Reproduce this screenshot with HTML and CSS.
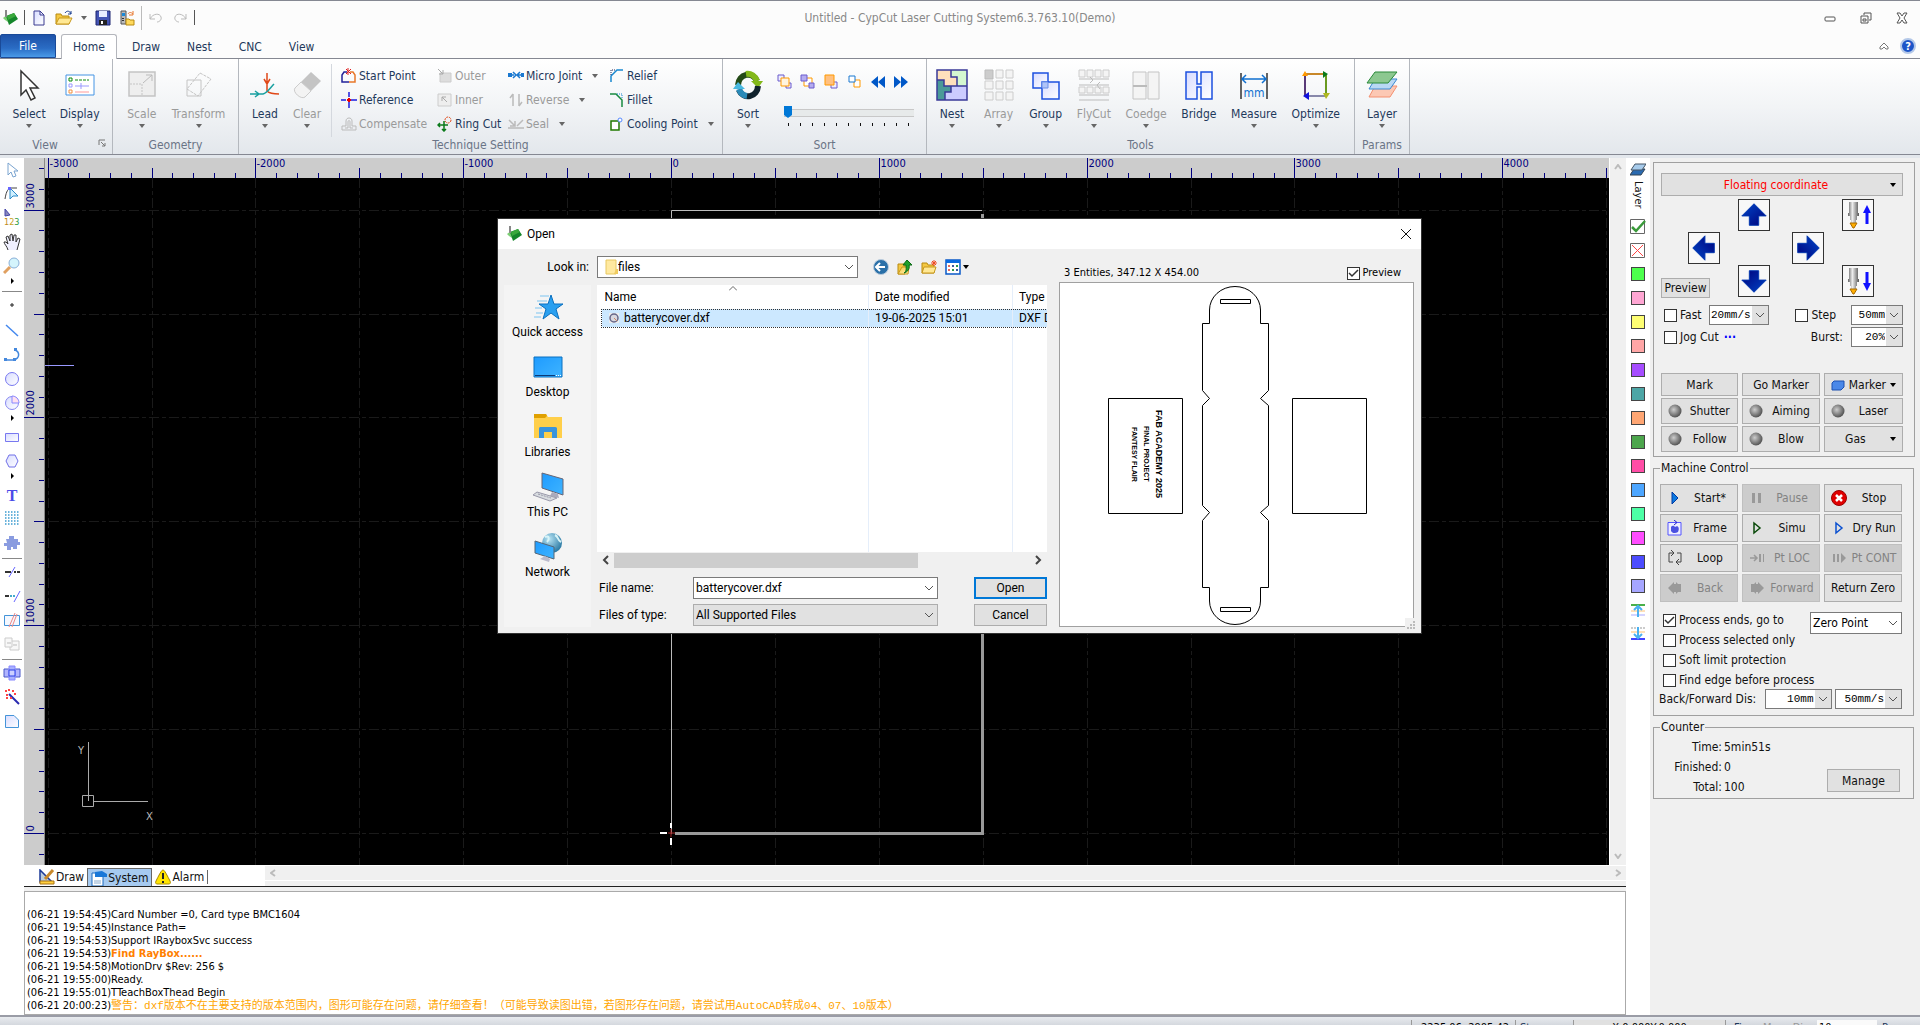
FILE: index.html
```html
<!DOCTYPE html>
<html lang="en">
<head>
    <meta charset="UTF-8">
    <meta name="viewport" content="width=device-width, initial-scale=1.0">
    <title>Untitled - CypCut Laser Cutting System</title>
    <link rel="stylesheet" href="styles.css">
</head>
<body>
    <svg class="defs" width="0" height="0" aria-hidden="true">
      <defs>
        <linearGradient id="lilac" x1="0" y1="0" x2="1" y2="1"><stop offset="0" stop-color="#d8dcff"/><stop offset="1" stop-color="#fff"/></linearGradient>
        <linearGradient id="navy" x1="0" y1="0" x2="1" y2="1"><stop offset="0" stop-color="#0046c8"/><stop offset="1" stop-color="#00007a"/></linearGradient>
        <linearGradient id="screen" x1="0" y1="0" x2="1" y2="1"><stop offset="0" stop-color="#1e9bff"/><stop offset="1" stop-color="#3fb4ff"/></linearGradient>
        <linearGradient id="metal"><stop offset="0" stop-color="#666"/><stop offset="0.4" stop-color="#eee"/><stop offset="1" stop-color="#555"/></linearGradient>
        <linearGradient id="gold" x1="0" y1="0" x2="1" y2="1"><stop offset="0" stop-color="#f4c842"/><stop offset="1" stop-color="#fff0b0"/></linearGradient>
        <radialGradient id="ball" cx="0.4" cy="0.4" r="0.6"><stop offset="0" stop-color="#ccc"/><stop offset="1" stop-color="#555"/></radialGradient>
        <radialGradient id="globe" cx="0.35" cy="0.3" r="0.8"><stop offset="0" stop-color="#b8e4f4"/><stop offset="1" stop-color="#1c6f9c"/></radialGradient>
        <symbol id="app" viewBox="0 0 16 16"><path d="M1 8 5 5 6 12 3 10Z" fill="#7ccf74"/><path d="M4 6 12 3 16 9 7 15Z" fill="#15862a"/><path d="M5 6 12 3 14 6 6 10Z" fill="#3aa83c"/><path d="M4 0V7" stroke="#888" fill="none" stroke-width="2"/></symbol>
        <symbol id="folder" viewBox="0 0 16 16"><path d="M1 4H6L7 6H13V14H1Z" fill="#f4c842" stroke="#b88a10"/><path d="M3 8H15L13 14H1Z" fill="#ffe894" stroke="#c8981c"/></symbol>
        <symbol id="led" viewBox="0 0 14 14"><circle cx="7" cy="7" r="6.5" fill="url(#ball)"/></symbol>
        <symbol id="arrow" viewBox="0 0 32 32"><path d="M16 4 29 17H21V27H11V17H3Z" fill="url(#navy)" stroke="#0038b0"/></symbol>
        <symbol id="nozzle" viewBox="0 0 14 28"><path d="M3 1H12V12H3ZM2 12H13V15H2ZM4 15H11V19H4ZM5 19H10V22H5Z" fill="url(#metal)"/><path d="M4 22H11L8 27H7Z" fill="#ffae00" stroke="#a86a00"/></symbol>
      </defs>
    </svg>

    <header class="titlebar">
      <div class="quick">
        <svg width="16" height="16"><use href="#app"/></svg>
        <i class="bar"></i>
        <button aria-label="New"><svg width="16" height="16" viewBox="0 0 16 16"><path d="M3 1H9L13 5V15H3Z" fill="url(#lilac)" stroke="#3a3a90"/><path d="M9 1V5H13" fill="none" stroke="#3a3a90"/></svg></button>
        <button aria-label="Open file"><svg width="18" height="16" viewBox="0 0 18 16"><path d="M1 4H6L7 6H14V14H1Z" fill="#f4c842" stroke="#b88a10"/><path d="M4 8H17L14 14H1Z" fill="#ffe894" stroke="#c8981c"/><path d="M10 3C12 0 15 1 16 4M16 4V1M16 4H13" fill="none" stroke="#1a3e90"/></svg></button>
        <button class="tiny" aria-label="Recent files"><i class="down"></i></button>
        <button aria-label="Save"><svg width="16" height="16" viewBox="0 0 16 16"><path d="M1 1H15V15H1Z" fill="#4454b4" stroke="#1c2470"/><path d="M4 1H12V7H4Z" fill="#e8ecff"/><path d="M4 10H12V15H4Z" fill="#222"/><path d="M6 11H8V14H6Z" fill="#fff"/></svg></button>
        <button aria-label="Import"><svg width="16" height="16" viewBox="0 0 16 16"><path d="M2 1H7V14H2Z" fill="#bbb" stroke="#555"/><path d="M3 3H6V6H3Z" fill="#1b8ad8"/><path d="M4 8V12" stroke="#333" stroke-width="2" stroke-dasharray="1"/><path d="M7 9H10L11 10H15V15H7Z" fill="#ffd95c" stroke="#b88a10"/><path d="M9 4C10 2 12 2 14 4M14 1V5H10" fill="none" stroke="#e8762c"/></svg></button>
        <i class="bar tall"></i>
        <button aria-label="Undo" disabled><svg width="16" height="16" viewBox="0 0 16 16"><path d="M2 4V9H7M2 9C5 3 12 3 13 7C14 10 11 12 9 12" fill="none" stroke="#bbb"/></svg></button>
        <button aria-label="Redo" disabled><svg width="16" height="16" viewBox="0 0 16 16"><path d="M14 4V9H9M14 9C11 3 4 3 3 7C2 10 5 12 7 12" fill="none" stroke="#bbb"/></svg></button>
        <i class="bar"></i>
      </div>
      <div class="title">Untitled - CypCut Laser Cutting System6.3.763.10(Demo)</div>
      <div class="winbtns">
        <button aria-label="Minimize"><svg width="12" height="12" viewBox="0 0 12 12"><rect x="1" y="5" width="10" height="4" rx="1" fill="#fff" stroke="#555"/></svg></button>
        <button aria-label="Restore"><svg width="12" height="12" viewBox="0 0 12 12"><path d="M4 3V1H11V8H9M1 4H8V11H1ZM3 7H6V9H3Z" fill="none" stroke="#555"/></svg></button>
        <button aria-label="Close"><svg width="12" height="12" viewBox="0 0 12 12"><path d="M1 1H4L6 4 8 1H11L8 6 11 11H8L6 8 4 11H1L4 6Z" fill="#fff" stroke="#555"/></svg></button>
      </div>
    </header>

    <nav class="tabs">
      <a class="file" href="#">File</a>
      <a class="active" href="#">Home</a>
      <a href="#">Draw</a>
      <a href="#">Nest</a>
      <a href="#">CNC</a>
      <a href="#">View</a>
      <div class="help">
        <svg width="12" height="12" viewBox="0 0 12 12"><path d="M2 7 6 3 10 7V9H8L6 7 4 9H2Z" fill="#fff" stroke="#777"/></svg>
        <svg width="16" height="16" viewBox="0 0 16 16"><circle cx="8" cy="8" r="7" fill="#1d55c8" stroke="#b4c8e8" stroke-width="2"/><text x="8" y="12" text-anchor="middle" fill="#fff" font-size="11" font-weight="bold">?</text></svg>
      </div>
    </nav>

    <section class="ribbon">
      <div class="group view">
        <div class="tools">
          <button class="big"><svg width="32" height="32" viewBox="0 0 32 32"><path d="M8 2V26L13 21 18 31 22 29 17 19H25Z" fill="#fff" stroke="#333" stroke-width="1.5"/></svg><span>Select</span><i class="down"></i></button>
          <button class="big"><svg width="32" height="32" viewBox="0 0 32 32"><path d="M2 6H30V26H2Z" fill="#fff" stroke="#4494e4"/><path d="M5 9H8V12H5Z" fill="none" stroke="#0a8a0a"/><path d="M5 15H8V18H5Z" fill="none" stroke="#99f"/><path d="M5 21H8V24H5Z" fill="none" stroke="#f09040"/><path d="M11 11H25" stroke="#0a8a0a" stroke-dasharray="3 1"/><path d="M11 17H25M17 14V20" stroke="#99f"/><path d="M11 23H25" stroke="#f99"/></svg><span>Display</span><i class="down"></i></button>
        </div>
        <div class="caption">View<svg width="8" height="8" viewBox="0 0 8 8"><path d="M1 6V1H7M3 3 7 7M7 4V7H4" fill="none" stroke="#777"/></svg></div>
      </div>
      <div class="group geometry">
        <div class="tools">
          <button class="big" disabled><svg width="32" height="32" viewBox="0 0 32 32"><path d="M3 3H29V27H3Z" fill="#eee" stroke="#c4c4c4" stroke-width="1.5"/><path d="M4 15H16V27" fill="none" stroke="#c4c4c4" stroke-dasharray="2 1"/><path d="M17 14 26 6M20 6H26V12" fill="none" stroke="#bbb"/></svg><span>Scale</span><i class="down"></i></button>
          <button class="big" disabled><svg width="32" height="32" viewBox="0 0 32 32"><path d="M4 11H18V27H4Z" fill="none" stroke="#c4c4c4"/><path d="M17 4 28 10 15 27 4 20Z" fill="none" stroke="#c4c4c4" stroke-dasharray="3 1"/></svg><span>Transform</span><i class="down"></i></button>
        </div>
        <div class="caption">Geometry</div>
      </div>
      <div class="group technique">
        <div class="tools">
          <button class="big"><svg width="32" height="32" viewBox="0 0 32 32"><path d="M18 4V22M15 10 18 15 21 10M18 22C21 25 25 25 30 25" fill="none" stroke="#e04818" stroke-width="1.5"/><path d="M1 25H14C18 24 21 19 25 15M6 22 10 25 6 28" fill="none" stroke="#18a0a0" stroke-width="1.5"/></svg><span>Lead</span><i class="down"></i></button>
          <button class="big" disabled><svg width="32" height="32" viewBox="0 0 32 32"><path d="M20 3 30 12 14 28C11 31 1 23 4 19Z" fill="#c4c4c4"/><path d="M10 13 20 22 14 28C10 31 1 23 4 19Z" fill="#f3f3f3" stroke="#ccc"/></svg><span>Clear</span><i class="down"></i></button>
          <div class="rows">
            <button class="small"><svg width="16" height="16" viewBox="0 0 16 16"><path d="M6 4H3L1 7V14H8" fill="none" stroke="#22229a" stroke-width="1.5"/><path d="M9 4H12L14 7V14H8" fill="none" stroke="#e8782a" stroke-width="1.5"/><path d="M5 1 10 6M10 1 5 6M7 0V7" stroke="#e02020"/></svg>Start Point</button>
            <button class="small"><svg width="16" height="16" viewBox="0 0 16 16"><path d="M8 0V5M8 10V16M0 8H5M10 8H16" stroke="#1c1ce0" stroke-width="1.5"/><path d="M6 8H10M8 6V10" stroke="#e00" stroke-width="2"/></svg>Reference</button>
            <button class="small" disabled><svg width="16" height="16" viewBox="0 0 16 16"><path d="M1 14V10H5V5C5 1 11 1 11 5V10H15V14ZM4 12H7V6C7 4 9 4 9 6V12H12" fill="none" stroke="#bbb"/></svg>Compensate</button>
            <button class="small" disabled><svg width="16" height="16" viewBox="0 0 16 16"><path d="M3 5H14V14H3Z" fill="#ddd" stroke="#ccc"/><path d="M1 1 6 6M6 2V6H2" fill="none" stroke="#aaa"/></svg>Outer</button>
            <button class="small" disabled><svg width="16" height="16" viewBox="0 0 16 16"><path d="M1 2H14V14H1Z" fill="#eee" stroke="#ccc"/><path d="M10 10 5 5M5 9V5H9" fill="none" stroke="#aaa"/></svg>Inner</button>
            <button class="small"><svg width="16" height="16" viewBox="0 0 16 16"><circle cx="11" cy="4" r="3" fill="none" stroke="#e04818" stroke-dasharray="2 1"/><path d="M1 9H11M7 5V15M3 7 1 9 3 11M5 13 7 15 9 13" fill="none" stroke="#0a7a1a" stroke-width="1.5"/></svg>Ring Cut</button>
            <button class="small"><svg width="16" height="16" viewBox="0 0 16 16"><path d="M0 5H4V9H0ZM13 5H16V9H13Z" fill="#1a78d0"/><path d="M4 7H6M10 7H13M5 4 8 7 5 10M12 4 9 7 12 10" fill="none" stroke="#1a78d0" stroke-width="1.5"/></svg>Micro Joint<i class="down"></i></button>
            <button class="small" disabled><svg width="16" height="16" viewBox="0 0 16 16"><path d="M5 14V2M2 6 5 2M11 2V14M14 10 11 14" fill="none" stroke="#bbb" stroke-width="1.5"/></svg>Reverse<i class="down"></i></button>
            <button class="small" disabled><svg width="16" height="16" viewBox="0 0 16 16"><path d="M0 12H16M1 4 7 10M7 5V10H2M15 4 9 10" fill="none" stroke="#bbb" stroke-width="1.5"/></svg>Seal<i class="down"></i></button>
            <button class="small"><svg width="16" height="16" viewBox="0 0 16 16"><path d="M2 14V8L8 2H14" fill="none" stroke="#1888d0" stroke-width="1.5"/><path d="M2 7V2H7" fill="none" stroke="#225" stroke-dasharray="1"/></svg>Relief</button>
            <button class="small"><svg width="16" height="16" viewBox="0 0 16 16"><path d="M1 2H7L13 8V15" fill="none" stroke="#188a40" stroke-width="1.5"/><path d="M8 2H13V7" fill="none" stroke="#1888d0" stroke-dasharray="1"/></svg>Fillet</button>
            <button class="small"><svg width="16" height="16" viewBox="0 0 16 16"><path d="M2 5H10V14H2Z" fill="#fff" stroke="#227a00" stroke-width="1.5"/><circle cx="11" cy="4" r="2" fill="#fff" stroke="#58f"/></svg>Cooling Point<i class="down"></i></button>
          </div>
        </div>
        <div class="caption">Technique Setting</div>
      </div>
      <div class="group sort">
        <div class="tools">
          <button class="big"><svg width="32" height="32" viewBox="0 0 32 32"><path d="M6 16A10 11 0 0 1 25 12" fill="none" stroke="#234a16" stroke-width="6"/><path d="M14 5A10 11 0 0 1 25 12" fill="none" stroke="#83b81a" stroke-width="6"/><path d="M19 12H31L26 19Z" fill="#83b81a"/><path d="M26 17A10 11 0 0 1 7 21" fill="none" stroke="#10222c" stroke-width="6"/><path d="M15 27A10 11 0 0 1 7 20" fill="none" stroke="#2a8ab8" stroke-width="6"/><path d="M1 20H13L6 13Z" fill="#48b8e0"/></svg><span>Sort</span><i class="down"></i></button>
          <div class="sorter">
            <div class="order">
              <button aria-label="Bring to front"><svg width="16" height="16" viewBox="0 0 16 16"><path d="M1 1H7V7H1ZM9 9H14V14H9Z" fill="#eef" stroke="#6a5acd"/><path d="M4 4H12V12H4Z" fill="#fff4e0" stroke="#f90"/></svg></button>
              <button aria-label="Send to back"><svg width="16" height="16" viewBox="0 0 16 16"><path d="M4 4H12V12H4Z" fill="#fff" stroke="#f90"/><path d="M1 1H7V7H1ZM9 9H14V14H9Z" fill="#b4acf0" stroke="#6a5acd"/></svg></button>
              <button aria-label="Move forward"><svg width="16" height="16" viewBox="0 0 16 16"><path d="M8 8H14V14H8Z" fill="#eef" stroke="#6a5acd"/><path d="M2 1H11V11H2Z" fill="#ffc080" stroke="#f90"/></svg></button>
              <button aria-label="Move backward"><svg width="16" height="16" viewBox="0 0 16 16"><path d="M7 6H13V13H7Z" fill="#fff" stroke="#f90"/><path d="M2 2H8V8H2Z" fill="#fff" stroke="#1a78d0"/></svg></button>
              <button aria-label="Previous"><svg width="16" height="16" viewBox="0 0 16 16"><path d="M8 2V14L1 8ZM15 2V14L8 8Z" fill="#0058c8"/></svg></button>
              <button aria-label="Next"><svg width="16" height="16" viewBox="0 0 16 16"><path d="M1 2V14L8 8ZM8 2V14L15 8Z" fill="#0058c8"/></svg></button>
            </div>
            <input type="range" min="0" max="10" value="0" aria-label="Sort position">
            <div class="ticks"></div>
          </div>
        </div>
        <div class="caption">Sort</div>
      </div>
      <div class="group nesting">
        <div class="tools">
          <button class="big"><svg width="32" height="32" viewBox="0 0 32 32"><path d="M1 1H31V31H1Z" fill="#fff"/><path d="M1 1H15V8H21V17H8V11H1Z" fill="#ffe0bc"/><path d="M15 1H31V18H21V8H15Z" fill="#d4f8d0"/><path d="M1 11H8V17H15V23H9V31H1Z" fill="#4a9a98"/><path d="M15 17H31V31H9V23H15Z" fill="#ccccff"/><path d="M1 1H31V31H1ZM15 1V8H21V17H31M1 11H8V17H21M15 17V23H9V31" fill="none" stroke="#3a3a98" stroke-width="1.5"/></svg><span>Nest</span><i class="down"></i></button>
          <button class="big" disabled><svg width="32" height="32" viewBox="0 0 32 32"><path d="M2 1H10V10H2Z" fill="#ccc" stroke="#bbb"/><path d="M13 1H20V9H13ZM23 1H30V9H23ZM2 12H10V20H2ZM13 12H20V20H13ZM23 12H30V20H23ZM2 23H10V31H2ZM13 23H20V31H13ZM23 23H30V31H23Z" fill="#f4f4f4" stroke="#ccc"/></svg><span>Array</span><i class="down"></i></button>
          <button class="big"><svg width="32" height="32" viewBox="0 0 32 32"><path d="M3 4H18V19H3Z" fill="url(#lilac)" stroke="#1c50e0" stroke-width="1.5"/><path d="M12 13H29V30H12Z" fill="url(#lilac)" stroke="#1c50e0" stroke-width="1.5"/><path d="M12 13H18V19H12Z" fill="#b0c4f8" stroke="#6a90e8"/></svg><span>Group</span><i class="down"></i></button>
          <button class="big" disabled><svg width="32" height="32" viewBox="0 0 32 32"><path d="M1 1H7V8H1ZM9 1H15V8H9ZM17 1H23V8H17ZM25 1H31V8H25ZM1 18H7V24H1ZM9 18H15V24H9ZM17 18H23V24H17ZM25 18H31V24H25Z" fill="#f4f4f4" stroke="#ccc"/><path d="M1 10H31M1 16H31M1 26H31M1 31H31M12 8 15 11 12 14M22 13 19 16 22 20" fill="none" stroke="#bbb"/></svg><span>FlyCut</span><i class="down"></i></button>
          <button class="big" disabled><svg width="32" height="32" viewBox="0 0 32 32"><path d="M3 3H16V30H3ZM18 3H29V30H18Z" fill="#f4f4f4" stroke="#c4c4c4"/><path d="M3 17H17" stroke="#bbb" stroke-width="2"/></svg><span>Coedge</span><i class="down"></i></button>
          <button class="big"><svg width="32" height="32" viewBox="0 0 32 32"><path d="M3 3H14V15H18V3H29V30H18V18H14V30H3Z" fill="url(#lilac)" stroke="#1c50e0" stroke-width="1.5"/></svg><span>Bridge</span></button>
          <button class="big"><svg width="32" height="32" viewBox="0 0 32 32"><path d="M3 4V30M29 4V30" stroke="#333" stroke-width="1.5"/><path d="M4 10H28M8 6 4 10 8 14M24 6 28 10 24 14" fill="none" stroke="#1070d0" stroke-width="1.5"/><text x="16" y="28" text-anchor="middle" font-size="12" fill="#1070d0">mm</text></svg><span>Measure</span><i class="down"></i></button>
          <button class="big"><svg width="32" height="32" viewBox="0 0 32 32"><path d="M5 5H26" stroke="#c8882a" stroke-width="2"/><path d="M26 5V27" stroke="#6a9a20" stroke-width="2"/><path d="M6 27H26" stroke="#88a" stroke-width="2"/><path d="M5 5V27" stroke="#5a3a78" stroke-width="2"/><path d="M2 7 5 2 8 7" fill="#f90"/><path d="M23 2 28 5 23 9" fill="#0a7a1a"/><path d="M23 24 26 30 30 24" fill="#b0b820"/><path d="M9 23 3 27 9 31" fill="#11d"/></svg><span>Optimize</span><i class="down"></i></button>
        </div>
        <div class="caption">Tools</div>
      </div>
      <div class="group params">
        <div class="tools">
          <button class="big"><svg width="32" height="32" viewBox="0 0 32 32"><path d="M9 17H31L24 28H3Z" fill="#fcc8b4" stroke="#f49070"/><path d="M9 10H31L24 20H3Z" fill="#b8d8f4" stroke="#3a88d0"/><path d="M9 3H31L22 14H1Z" fill="#8cc890" stroke="#2a8a3a"/></svg><span>Layer</span><i class="down"></i></button>
        </div>
        <div class="caption">Params</div>
      </div>
    </section>

    <main>
      <aside class="toolbar">
        <button aria-label="Select"><svg width="18" height="18" viewBox="0 0 18 18"><path d="M5 2V14L8 11 10 16 13 15 11 10H15Z" fill="#fff" stroke="#7aa4d0"/></svg></button>
        <button aria-label="Edit node"><svg width="18" height="18" viewBox="0 0 18 18"><path d="M7 3V14L10 11H15Z" fill="#d0f0ff" stroke="#2a8ac8"/><path d="M2 14C3 8 4 5 7 3H14" fill="none" stroke="#444"/><path d="M5 2H8V5H5Z" fill="#66f"/></svg></button>
        <button aria-label="Edit order"><svg width="20" height="18" viewBox="0 0 20 18"><path d="M3 0V7L8 6Z" fill="#88b" stroke="#44a"/><text x="2" y="16" font-size="9" fill="#c08a1a">1<tspan fill="#c8a020">2</tspan><tspan fill="#2a9a3a">3</tspan></text></svg></button>
        <button aria-label="Pan"><svg width="18" height="18" viewBox="0 0 18 18"><path d="M5 17C4 13 1 11 1 9L3 9 5 11 3 4 5 3 7 8 7 2 9 1 10 8 11 2 13 2 13 9 15 5 17 6 14 17" fill="#f0f0ff" stroke="#333"/></svg></button>
        <button aria-label="Zoom"><svg width="18" height="18" viewBox="0 0 18 18"><path d="M1 16 7 10" stroke="#e0a060" stroke-width="3"/><circle cx="11" cy="6" r="5" fill="#d4f4fc" stroke="#8ab0d8"/></svg></button>
        <i class="right"></i>
        <hr>
        <button aria-label="Dot"><svg width="18" height="18" viewBox="0 0 18 18"><path d="M9 7V11M7 9H11" stroke="#222"/></svg></button>
        <button class="line" aria-label="Line"><svg width="18" height="18" viewBox="0 0 18 18"><path d="M3 3 15 14" stroke="#48e" stroke-width="1.5"/></svg></button>
        <button aria-label="Polyline"><svg width="18" height="18" viewBox="0 0 18 18"><path d="M2 14H11C17 12 17 6 12 4" fill="none" stroke="#48d" stroke-width="1.5"/><path d="M1 12H4V15H1ZM10 12H13V15H10ZM11 2H14V5H11Z" fill="#48d"/></svg></button>
        <button aria-label="Circle"><svg width="18" height="18" viewBox="0 0 18 18"><circle cx="9" cy="9" r="6.5" fill="url(#lilac)" stroke="#7878f0"/></svg></button>
        <button aria-label="Arc"><svg width="18" height="18" viewBox="0 0 18 18"><circle cx="9" cy="9" r="6.5" fill="url(#lilac)" stroke="#8888f0"/><path d="M9 2V9H16C16 5 13 2 9 2" fill="#ffe0f0" stroke="#88f"/></svg></button>
        <i class="right"></i>
        <button aria-label="Rectangle"><svg width="18" height="18" viewBox="0 0 18 18"><path d="M2.500 5.500H15.500V13.500H2.500Z" fill="url(#lilac)" stroke="#7878f0"/></svg></button>
        <button aria-label="Polygon"><svg width="18" height="18" viewBox="0 0 18 18"><path d="M6 3H12L15 9 12 15H6L3 9Z" fill="url(#lilac)" stroke="#7070e8"/></svg></button>
        <i class="right"></i>
        <button aria-label="Text"><svg width="18" height="18" viewBox="0 0 18 18"><text class="tee" x="9" y="15" text-anchor="middle">T</text></svg></button>
        <button aria-label="Grid fill"><svg width="18" height="18" viewBox="0 0 18 18"><path d="M2 2H17M2 5H17M2 8H17M2 11H17M2 14H17" stroke="#3a9ad0" stroke-width="1.5" stroke-dasharray="1.500"/></svg></button>
        <button aria-label="Plug-in"><svg width="18" height="18" viewBox="0 0 18 18"><path d="M3 5H6V2H11V5H15V8H17V11H14V15H10V13H8V16H4V12H1V9H4Z" fill="#8a9ce0"/></svg></button>
        <hr>
        <button aria-label="Trim"><svg width="18" height="18" viewBox="0 0 18 18"><path d="M2 9H8M11 9H13M14 9H17" stroke="#333" stroke-width="2"/><path d="M6 14 12 4" stroke="#66f"/></svg></button>
        <button aria-label="Extend"><svg width="18" height="18" viewBox="0 0 18 18"><path d="M2 9H6" stroke="#333" stroke-width="2"/><path d="M7 9H12" stroke="#4ac" stroke-width="2" stroke-dasharray="2 1"/><path d="M11 15 17 4" stroke="#66f"/></svg></button>
        <button aria-label="Split"><svg width="18" height="18" viewBox="0 0 18 18"><path d="M1.500 4.500H16.500V14.500H1.500Z" fill="#f4f8ff" stroke="#4494d8"/><path d="M6 16 12 2M9 16 14 3" stroke="#e88"/></svg></button>
        <button aria-label="Join" disabled><svg width="18" height="18" viewBox="0 0 18 18"><path d="M2 3H9V12H2ZM9 6H16V15H7V12" fill="#f8f8f8" stroke="#ccc"/><path d="M4 8H8M10 10H14" stroke="#bbb"/></svg></button>
        <hr>
        <button aria-label="Combine"><svg width="18" height="18" viewBox="0 0 18 18"><path d="M1 5H17V13H1Z" fill="#b0b4ff" stroke="#4a58c8"/><path d="M6 2H12V16H6Z" fill="#a8b0ff" stroke="#88f"/><path d="M6 6H12V12H6Z" fill="#ccd0ff" stroke="#2a40e8"/></svg></button>
        <button aria-label="Optimize"><svg width="18" height="18" viewBox="0 0 18 18"><path d="M6 6 16 16" stroke="#2a2ab0" stroke-width="2"/><path d="M2 3H4M5 2H7M9 3H11M3 7H5M7 10H9M11 6H13M3 10H5" stroke="#f44" stroke-width="2"/></svg></button>
        <button aria-label="Corner"><svg width="18" height="18" viewBox="0 0 18 18"><path d="M2.500 3.500H11L15.500 8V15.500H2.500Z" fill="url(#lilac)" stroke="#4494d8"/></svg></button>
      </aside>

      <section class="work">
        <div class="plot">
          <svg id="rulerX" class="ruler-x"></svg>
          <svg id="rulerY" class="ruler-y"></svg>
          <svg id="board" class="board">
            <g id="grid"></g>
            <path d="M626.500 656V32.500H937" fill="none" stroke="#bbb"/>
            <path d="M937.500 36V655.500H630" fill="none" stroke="#999" stroke-width="3"/>
            <path d="M615 655H622M626 645V650M626 660V667" stroke="#fff" stroke-width="2"/>
            <path d="M623 655H630M626 651V659" stroke="#a02020"/>
            <path d="M0 187.500H29" stroke="#99f"/>
            <path d="M43.500 564V623M49 623.500H103" stroke="#aaa"/>
            <path d="M37.500 617.500H48.500V628.500H37.500Z" fill="none" stroke="#aaa"/>
            <text x="33" y="576" fill="#bbb">Y</text>
            <text x="101" y="642" fill="#bbb">X</text>
          </svg>
          <div class="vscroll">
            <svg width="8" height="6" viewBox="0 0 8 6"><path d="M1 5 4 1 7 5" fill="none" stroke="#bbb" stroke-width="2"/></svg>
            <svg width="8" height="6" viewBox="0 0 8 6"><path d="M1 1 4 5 7 1" fill="none" stroke="#bbb" stroke-width="2"/></svg>
          </div>
        </div>

        <div class="pages">
          <div class="pagetabs">
            <button><svg width="16" height="16" viewBox="0 0 16 16"><path d="M1 1V13H13Z" fill="#bcd" stroke="#1c3a98" stroke-width="1.5"/><path d="M6 10 14 1" stroke="#c8882a" stroke-width="3"/><path d="M1 12H15V15H1Z" fill="#ffd040" stroke="#a87010"/></svg>Draw</button>
            <button class="active"><svg width="16" height="16" viewBox="0 0 16 16"><path d="M1 3H12V16H1Z" fill="#fff" stroke="#1a6ac0"/><path d="M4 7H16V4L11 1 4 2Z" fill="#1a78d8"/><path d="M3 11H10M3 13H10" stroke="#8ac"/></svg>System</button>
            <button><svg width="16" height="16" viewBox="0 0 16 16"><path d="M8 1C9 1 10 2 15 12C16 14 15 15 14 15H2C1 15 0 14 1 12C6 2 7 1 8 1Z" fill="#ffe400" stroke="#a88a00"/><path d="M8 4V10M8 12V14" stroke="#222" stroke-width="2"/></svg>Alarm</button>
          </div>
          <div class="hscroll">
            <svg width="6" height="8" viewBox="0 0 6 8"><path d="M5 1 1 4 5 7" fill="none" stroke="#bbb" stroke-width="2"/></svg>
            <svg width="6" height="8" viewBox="0 0 6 8"><path d="M1 1 5 4 1 7" fill="none" stroke="#bbb" stroke-width="2"/></svg>
          </div>
        </div>

        <div class="log">
          <p>(06-21 19:54:45)Card Number =0, Card type BMC1604</p>
          <p>(06-21 19:54:45)Instance Path=</p>
          <p>(06-21 19:54:53)Support IRayboxSvc success</p>
          <p>(06-21 19:54:53)<b>Find RayBox......</b></p>
          <p>(06-21 19:54:58)MotionDrv $Rev: 256 $</p>
          <p>(06-21 19:55:00)Ready.</p>
          <p>(06-21 19:55:01)TTeachBoxThead Begin</p>
          <p>(06-21 20:00:23)<span lang="zh">警告：dxf版本不在主要支持的版本范围内，图形可能存在问题，请仔细查看！（可能导致读图出错，若图形存在问题，请尝试用AutoCAD转成04、07、10版本）</span></p>
        </div>
      </section>

      <aside class="layers">
        <svg width="16" height="16" viewBox="0 0 16 16"><path d="M4 7H15L11 13H0Z" fill="#2a6ab0" stroke="#345"/><path d="M5 2H16L12 8H1Z" fill="#a8ccec" stroke="#456"/></svg>
        <span class="name">Layer</span>
        <button aria-label="Show all"><svg width="16" height="16" viewBox="0 0 16 16"><path d="M.5.500H14.500V14.500H.5Z" fill="#fff" stroke="#666"/><path d="M2 8 6 12 15 2" fill="none" stroke="#3a9a3a" stroke-width="2.500"/></svg></button>
        <button aria-label="Hide all"><svg width="16" height="16" viewBox="0 0 16 16"><path d="M.5.500H14.500V14.500H.5Z" fill="#fff" stroke="#666"/><path d="M2 2 13 13M13 2 2 13" stroke="#f44"/></svg></button>
        <button class="swatch lime" aria-label="Layer 1"></button>
        <button class="swatch pink" aria-label="Layer 2"></button>
        <button class="swatch yellow" aria-label="Layer 3"></button>
        <button class="swatch salmon" aria-label="Layer 4"></button>
        <button class="swatch purple" aria-label="Layer 5"></button>
        <button class="swatch teal" aria-label="Layer 6"></button>
        <button class="swatch orange" aria-label="Layer 7"></button>
        <button class="swatch green" aria-label="Layer 8"></button>
        <button class="swatch rose" aria-label="Layer 9"></button>
        <button class="swatch sky" aria-label="Layer 10"></button>
        <button class="swatch mint" aria-label="Layer 11"></button>
        <button class="swatch magenta" aria-label="Layer 12"></button>
        <button class="swatch blue" aria-label="Layer 13"></button>
        <button class="swatch lavender" aria-label="Layer 14"></button>
        <button aria-label="First layer"><svg width="16" height="16" viewBox="0 0 16 16"><path d="M1 2H15" stroke="#4ab04a" stroke-width="2"/><path d="M1 8H15" stroke="#ffe0b8" stroke-width="2"/><path d="M1 12H15" stroke="#d4d4ff" stroke-width="2"/><path d="M8 14V4M4 7 8 3 12 7" fill="none" stroke="#4ab0f0" stroke-width="2"/></svg></button>
        <button aria-label="Last layer"><svg width="16" height="16" viewBox="0 0 16 16"><path d="M1 1H15" stroke="#ccc" stroke-width="2" stroke-dasharray="2 1"/><path d="M1 5H15" stroke="#ffe0b8" stroke-width="2"/><path d="M1 12H15" stroke="#44f" stroke-width="2"/><path d="M8 0V10M4 7 8 11 12 7" fill="none" stroke="#4ab0f0" stroke-width="2"/></svg></button>
      </aside>

      <aside class="panel">
        <div class="box">
          <button class="btn coord"><span>Floating coordinate</span><i class="down"></i></button>
          <div class="jog">
            <button class="pad up" aria-label="Up"><svg width="30" height="30"><use href="#arrow"/></svg></button>
            <button class="pad left" aria-label="Left"><svg width="30" height="30"><use href="#arrow"/></svg></button>
            <button class="pad rightward" aria-label="Right"><svg width="30" height="30"><use href="#arrow"/></svg></button>
            <button class="pad downward" aria-label="Down"><svg width="30" height="30"><use href="#arrow"/></svg></button>
            <button class="pad head-up" aria-label="Head up"><svg width="14" height="28"><use href="#nozzle"/></svg><svg width="8" height="20" viewBox="0 0 8 20"><path d="M4 19V4" stroke="#11f" stroke-width="3"/><path d="M0 8 4 0 8 8Z" fill="#11f"/></svg></button>
            <button class="pad head-down" aria-label="Head down"><svg width="14" height="28"><use href="#nozzle"/></svg><svg width="8" height="20" viewBox="0 0 8 20"><path d="M4 1V16" stroke="#11f" stroke-width="3"/><path d="M0 12 4 20 8 12Z" fill="#11f"/></svg></button>
            <button class="btn preview">Preview</button>
          </div>
          <div class="speed">
            <label><input type="checkbox">Fast</label>
            <select class="mono wide" aria-label="Fast speed"><option>20mm/s</option></select>
            <label class="step"><input type="checkbox">Step</label>
            <select class="mono" aria-label="Step length"><option>50mm</option></select>
          </div>
          <div class="speed">
            <label><input type="checkbox">Jog Cut</label>
            <a class="dots" href="#">···</a>
            <label class="burst" for="burst">Burst:</label>
            <select id="burst" class="mono"><option>20%</option></select>
          </div>
          <div class="btns switches">
            <button class="btn">Mark</button>
            <button class="btn">Go Marker</button>
            <button class="btn marker"><svg width="14" height="14" viewBox="0 0 14 14"><path d="M3 3H13V9L10 12H1V5Z" fill="#4a88e8" stroke="#1c50b0"/></svg>Marker<i class="down"></i></button>
            <button class="btn"><svg width="14" height="14"><use href="#led"/></svg><span>Shutter</span></button>
            <button class="btn"><svg width="14" height="14"><use href="#led"/></svg><span>Aiming</span></button>
            <button class="btn"><svg width="14" height="14"><use href="#led"/></svg><span>Laser</span></button>
            <button class="btn"><svg width="14" height="14"><use href="#led"/></svg><span>Follow</span></button>
            <button class="btn"><svg width="14" height="14"><use href="#led"/></svg><span>Blow</span></button>
            <button class="btn"><span>Gas</span><i class="down"></i></button>
          </div>
        </div>

        <fieldset>
          <legend>Machine Control</legend>
          <div class="btns machine">
            <button class="btn"><svg width="16" height="16" viewBox="0 0 16 16"><path d="M5 2 11 8 5 14Z" fill="#0a78e0" stroke="#0038a0"/></svg><span>Start*</span></button>
            <button class="btn" disabled><svg width="16" height="16" viewBox="0 0 16 16"><path d="M3 3H6V13H3ZM9 3H12V13H9Z" fill="#999"/></svg><span>Pause</span></button>
            <button class="btn"><svg width="16" height="16" viewBox="0 0 16 16"><circle cx="8" cy="8" r="7.500" fill="#e00000" stroke="#900"/><path d="M5 5 11 11M11 5 5 11" stroke="#fff" stroke-width="2.500"/></svg><span>Stop</span></button>
            <button class="btn"><svg width="16" height="16" viewBox="0 0 16 16"><path d="M1 2.500H14V15H1Z" fill="#eef" stroke="#55f"/><path d="M4 7C6 5 7 6 8 7 11 5 13 8 11 12 8 14 5 13 4 11Z" fill="#4a50e0"/><path d="M7 0 10 2.500 7 5" fill="none" stroke="#22c"/></svg><span>Frame</span></button>
            <button class="btn"><svg width="16" height="16" viewBox="0 0 16 16"><path d="M5 3 11 8 5 13Z" fill="none" stroke="#0a4a0a" stroke-width="1.500"/></svg><span>Simu</span></button>
            <button class="btn"><svg width="16" height="16" viewBox="0 0 16 16"><path d="M5 3 11 8 5 13Z" fill="none" stroke="#0a50d0" stroke-width="1.500"/></svg><span>Dry Run</span></button>
            <button class="btn"><svg width="16" height="16" viewBox="0 0 16 16"><path d="M6 3H2V12H6M10 3H14V12H9M4 0 7 3 4 6M12 9 9 12 12 15" fill="none" stroke="#444"/></svg><span>Loop</span></button>
            <button class="btn" disabled><svg width="16" height="16" viewBox="0 0 16 16"><path d="M1 8H8M5 5 8 8 5 11" fill="none" stroke="#999" stroke-width="1.500"/><path d="M10 4H12V12H10ZM14 4H15V12H14Z" fill="#999"/></svg><span>Pt LOC</span></button>
            <button class="btn" disabled><svg width="16" height="16" viewBox="0 0 16 16"><path d="M2 4H4V12H2ZM6 4H8V12H6ZM10 3 15 8 10 13Z" fill="#999"/></svg><span>Pt CONT</span></button>
            <button class="btn" disabled><svg width="16" height="16" viewBox="0 0 16 16"><path d="M1 8 7 2V4H9V2L11 4H14V12H11L9 14V12H7V14Z" fill="#999"/></svg><span>Back</span></button>
            <button class="btn" disabled><svg width="16" height="16" viewBox="0 0 16 16"><path d="M15 8 9 2V4H7V2L5 4H2V12H5L7 14V12H9V14Z" fill="#999"/></svg><span>Forward</span></button>
            <button class="btn">Return Zero</button>
          </div>
          <div class="options">
            <div class="checks">
              <label><input type="checkbox" checked>Process ends, go to</label>
              <label><input type="checkbox">Process selected only</label>
              <label><input type="checkbox">Soft limit protection</label>
              <label><input type="checkbox">Find edge before process</label>
            </div>
            <select class="zero" aria-label="End position"><option>Zero Point</option></select>
          </div>
          <div class="distance">
            <label for="dis">Back/Forward Dis:</label>
            <select id="dis" class="mono"><option>10mm</option></select>
            <select class="mono" aria-label="Back and forward speed"><option>50mm/s</option></select>
          </div>
        </fieldset>

        <fieldset class="counter">
          <legend>Counter</legend>
          <dl>
            <dt>Time:</dt><dd>5min51s</dd>
            <dt>Finished:</dt><dd>0</dd>
            <dt>Total:</dt><dd>100</dd>
          </dl>
          <button class="btn">Manage</button>
        </fieldset>
      </aside>
    </main>

    <footer class="status">
      <span class="cell pos">2235.06, 2905.42</span>
      <span class="cell state">Stop</span>
      <span class="cell xy">X:0.000Y:0.000</span>
      <span class="cell tune">Fine</span>
      <span class="dim">Move Dis</span>
      <input type="text" value="10" aria-label="Move distance">
      <span class="param">Param</span>
    </footer>

    <div class="dialog" role="dialog" aria-label="Open">
      <div class="dialog-title">
        <svg width="16" height="16"><use href="#app"/></svg>
        <span>Open</span>
        <button aria-label="Close dialog"><svg width="10" height="10" viewBox="0 0 10 10"><path d="M0 0 10 10M10 0 0 10" stroke="#111"/></svg></button>
      </div>
      <div class="dialog-body">
        <div class="browser">
          <div class="lookin">
            <label for="look">Look in:</label>
            <select id="look"><option>files</option></select>
            <button aria-label="Back"><svg width="16" height="16" viewBox="0 0 16 16"><circle cx="8" cy="8" r="7.500" fill="#2a70a8" stroke="#bcd"/><path d="M3 8H12M7 4 3 8 7 12" fill="none" stroke="#fff" stroke-width="2"/></svg></button>
            <button aria-label="Up one level"><svg width="16" height="16" viewBox="0 0 16 16"><path d="M1 5H8V15H1Z" fill="#f4c842" stroke="#b88a10"/><path d="M1 15 5 8H12L11 15Z" fill="url(#gold)" stroke="#c8981c"/><path d="M7 14C10 12 9 9 9 6H6L10 1 15 6H12C13 9 11 13 7 14Z" fill="#1fa02c" stroke="#0a6a14"/></svg></button>
            <button aria-label="New folder"><svg width="16" height="16"><use href="#folder"/><path d="M10 4H16M13 1V7M11 2 15 6M15 2 11 6" stroke="#f04a20"/></svg></button>
            <button class="menu" aria-label="View menu"><svg width="16" height="16" viewBox="0 0 16 16"><path d="M1 1H15V15H1Z" fill="#fff" stroke="#0a5ac8" stroke-width="1.500"/><path d="M1 1H15V4H1Z" fill="#0a6ae0"/><path d="M3 7H5M3 11H5" stroke="#e86a5a" stroke-width="2"/><path d="M7 7H9M11 11H13" stroke="#3a58a0" stroke-width="2"/><path d="M7 11H9M11 7H13" stroke="#2a9a4a" stroke-width="2"/></svg><i class="down"></i></button>
          </div>
          <div class="places">
            <button><svg width="32" height="32" viewBox="0 0 32 32"><path d="M19 4 22 13H31L24 18 27 28 19 22 11 28 14 18 7 13H16Z" fill="#2aa0f0" stroke="#0a70c0"/><path d="M8 5H17M5 10H15M3 17H10M4 22H11M2 26H9" stroke="#7cc4f0"/></svg>Quick access</button>
            <button><svg width="32" height="32" viewBox="0 0 32 32"><path d="M2 6H30V26H2Z" fill="url(#screen)" stroke="#0a70c0"/><path d="M3 24.500H23" stroke="#0a3a78"/><path d="M24 24.500H30" stroke="#fff" stroke-dasharray="1"/></svg>Desktop</button>
            <button><svg width="32" height="32" viewBox="0 0 32 32"><path d="M2 3H14L16 6H30V27H2Z" fill="#ffcf4a"/><path d="M2 3H14L15 5 13 7H2Z" fill="#e0a000"/><path d="M7 27V18C7 16 8 16 9 16H23C25 16 25 17 25 18V27H20V21H12V27Z" fill="#3a94dc"/></svg>Libraries</button>
            <button><svg width="32" height="32" viewBox="0 0 32 32"><path d="M10 2 31 8V24L10 17Z" fill="url(#screen)" stroke="#667"/><path d="M20 21 26 23 27 27 18 25Z" fill="#aab"/><path d="M5 21 25 27 18 30 1 24Z" fill="#d8dce0" stroke="#99a"/><path d="M6 23 19 27" stroke="#99a" stroke-dasharray="2 1"/></svg>This PC</button>
            <button><svg width="32" height="32" viewBox="0 0 32 32"><circle cx="20" cy="12" r="10" fill="url(#globe)"/><path d="M13 6C17 4 18 8 15 11M23 4C27 6 25 9 29 11" fill="none" stroke="#d8f4f8" stroke-width="2"/><path d="M3 10 22 16V28L3 22Z" fill="url(#screen)" stroke="#567"/><path d="M13 25 18 28 17 31 8 28Z" fill="#bbc"/></svg>Network</button>
          </div>
          <div class="list">
            <svg class="caret" width="8" height="5" viewBox="0 0 8 5"><path d="M0 4.500 4 .5 8 4.500" fill="none" stroke="#666"/></svg>
            <table>
              <thead><tr><th>Name</th><th>Date modified</th><th>Type</th></tr></thead>
              <tbody>
                <tr class="selected"><td><svg width="12" height="12" viewBox="0 0 12 12"><path d="M1 1H11V11H1Z" fill="#eee"/><circle cx="6" cy="6" r="4" fill="#d8d8e0" stroke="#668" stroke-width="1.500"/><path d="M6 6 9 9" stroke="#c86"/></svg>batterycover.dxf</td><td>19-06-2025 15:01</td><td>DXF Drawing</td></tr>
                <tr class="rest"><td></td><td></td><td></td></tr>
              </tbody>
            </table>
          </div>
          <div class="listscroll">
            <svg width="8" height="10" viewBox="0 0 8 10"><path d="M6 1 2 5 6 9" fill="none" stroke="#444" stroke-width="2"/></svg>
            <i class="thumb"></i>
            <svg width="8" height="10" viewBox="0 0 8 10"><path d="M2 1 6 5 2 9" fill="none" stroke="#444" stroke-width="2"/></svg>
          </div>
          <div class="fields">
            <label for="fname">File name:</label>
            <input id="fname" type="text" value="batterycover.dxf">
            <button class="btn open">Open</button>
            <label for="ftype">Files of type:</label>
            <select id="ftype"><option>All Supported Files</option></select>
            <button class="btn">Cancel</button>
          </div>
        </div>
        <div class="previewer">
          <div class="info">
            <span>3 Entities, 347.12 X 454.00</span>
            <label><input type="checkbox" checked>Preview</label>
          </div>
          <div class="sheet">
            <svg width="352" height="343" viewBox="0 0 352 343">
              <g fill="none" stroke="#000">
                <path d="M48.500 115.500H122.500V230.500H48.500ZM232.500 115.500H306.500V230.500H232.500Z"/>
                <path d="M149.500 40.500V27A25.500 23.500 0 0 1 200.500 27V40.500H208.500V107.500L200.500 115.500 208.500 122.500V222.500L200.500 229.500 208.500 237.500V304.500H200.500V318A25.500 23.500 0 0 1 149.500 318V304.500H142.500V237.500L149.500 229.500 142.500 222.500V122.500L149.500 115.500 142.500 107.500V40.500Z"/>
                <path d="M160.500 16.500H190.500V20.500H160.500ZM160.500 324.500H190.500V328.500H160.500Z"/>
              </g>
              <text class="l1" transform="translate(96 127) rotate(90)">FAB ACADEMY 2025</text>
              <text class="l2" transform="translate(84 143) rotate(90)">FINAL PROJECT</text>
              <text class="l2" transform="translate(72 144) rotate(90)">FANTESY FLAIR</text>
            </svg>
          </div>
        </div>
      </div>
      <svg class="grip" width="14" height="14" viewBox="0 0 14 14"><path d="M8 3H10V5H8ZM5 6H7V8H5ZM8 6H10V8H8ZM2 9H4V11H2ZM5 9H7V11H5ZM8 9H10V11H8Z" fill="#bbb"/></svg>
    </div>

    <script src="script.js"></script>
</body>
</html>
```
FILE: script.js
```js
const NS = "http://www.w3.org/2000/svg";
const PX_PER_100 = 20.78;
// machine origin, measured inside the drawing board
const originX = 626;
const originY = 655;
const rulerSize = 20;

function add(parent, name, attrs, text) {
    const el = document.createElementNS(NS, name);
    for (const key in attrs) {
        el.setAttribute(key, attrs[key]);
    }
    if (text !== undefined) {
        el.textContent = text;
    }
    parent.appendChild(el);
}

function tickLength(i) {
    if (i % 10 === 0) return rulerSize;
    return i % 5 === 0 ? 10 : 5;
}

const board = document.getElementById("board");
const rulerX = document.getElementById("rulerX");
const rulerY = document.getElementById("rulerY");
const grid = document.getElementById("grid");
const width = board.clientWidth || board.getBoundingClientRect().width;
const height = board.clientHeight || board.getBoundingClientRect().height;

for (let i = -30; originX + i * PX_PER_100 < width; i++) {
    const x = Math.round(originX + i * PX_PER_100) + 0.5;
    add(rulerX, "path", { d: `M${x} ${rulerSize}V${rulerSize - tickLength(i)}` });
    if (i % 10 === 0) {
        add(rulerX, "text", { x: x + 1, y: 9 }, i * 100);
    }
    if (i % 5 === 0) {
        add(grid, "path", { d: `M${x} 0V${height}` });
    }
}

for (let i = 32; originY - i * PX_PER_100 < height; i--) {
    const y = Math.round(originY - i * PX_PER_100) + 0.5;
    add(rulerY, "path", { d: `M${rulerSize} ${y + rulerSize}H${rulerSize - tickLength(i)}` });
    if (i % 10 === 0) {
        add(rulerY, "text", { transform: `translate(10 ${y + rulerSize - 2}) rotate(-90)` }, i * 100);
    }
    if (i % 5 === 0) {
        add(grid, "path", { d: `M4 ${y}H${width}` });
    }
}
```
FILE: styles.css
```css
* {
    box-sizing: border-box;
}
body {
    margin: 0;
    height: 100vh;
    display: flex;
    flex-direction: column;
    overflow: hidden;
    font: 12px/16px "DejaVu Sans Condensed", "DejaVu Sans", sans-serif;
    color: #111;
    background: #f0f0f0;
}
button {
    font: inherit;
    color: inherit;
    padding: 0;
    border: 0;
    background: none;
}
svg {
    display: block;
    flex: none;
}
.defs {
    position: absolute;
}
a {
    color: inherit;
    text-decoration: none;
}
.down {
    display: block;
    flex: none;
    border: 3px solid transparent;
    border-top: 4px solid #666;
    border-bottom: 0;
}

/* title bar */
.titlebar {
    display: grid;
    grid-template-columns: 1fr auto 1fr;
    align-items: center;
    height: 34px;
    flex: none;
    background: #fcfcfc;
    border-top: 1px solid #858892;
}
.quick {
    display: flex;
    align-items: center;
    gap: 8px;
    padding-left: 2px;
    height: 24px;
}
.bar {
    width: 1px;
    height: 15px;
    background: #555;
    margin: 0 -2px;
}
.bar.tall {
    height: 24px;
    background: #bbb;
}
.title {
    color: #888;
}
.winbtns {
    display: flex;
    justify-content: flex-end;
    gap: 24px;
    padding-right: 12px;
}

/* tabs */
.tabs {
    display: flex;
    height: 25px;
    flex: none;
    background: #fcfcfc;
    border-bottom: 1px solid #858892;
    color: #1e395b;
}
.tabs a {
    padding: 5px 11px 0;
    margin-right: 5px;
}
.tabs .file {
    width: 56px;
    padding: 3px 0 0;
    text-align: center;
    color: #fff;
    background: linear-gradient(#1e52a8, #2a6cc4 60%, #4a9ae8);
    border: 1px solid #1a4a98;
    border-radius: 2px 2px 0 0;
}
.tabs .active {
    height: 25px;
    padding-top: 4px;
    margin-right: 4px;
    background: #fff;
    border: 1px solid #b4b6bc;
    border-bottom: 0;
    border-radius: 3px 3px 0 0;
}
.help {
    display: flex;
    align-items: center;
    gap: 10px;
    margin-left: auto;
    padding-right: 4px;
}

/* ribbon */
.ribbon {
    display: flex;
    height: 96px;
    flex: none;
    background: linear-gradient(#fff, #f2f4f6 50%, #e3e7ec);
    border-bottom: 1px solid #858892;
    color: #1e395b;
}
.group {
    display: flex;
    flex-direction: column;
    border-right: 1px solid #b4b8be;
}
.view { width: 113px; }
.geometry { width: 126px; }
.technique { width: 484px; }
.sort { width: 204px; }
.nesting { width: 428px; }
.params { width: 55px; }
.tools {
    display: flex;
    justify-content: center;
    height: 78px;
}
.technique .tools {
    justify-content: flex-start;
    padding-left: 5px;
}
.sort .tools {
    justify-content: flex-start;
    padding-left: 2px;
}
.nesting .tools {
    justify-content: space-between;
    padding: 0 8px 0 3px;
}
.caption {
    position: relative;
    text-align: center;
    color: #6a7486;
}
.view .caption {
    padding-right: 22px;
}
.caption svg {
    position: absolute;
    right: 6px;
    top: 2px;
}
.big {
    display: flex;
    flex-direction: column;
    align-items: center;
    padding: 10px 7px 0;
}
.technique .big {
    padding: 10px 5px 0;
}
.nesting .big {
    padding: 10px 6px 0;
}
.big span {
    margin: 5px 0 2px;
}
button:disabled {
    color: #9a9a9a;
}
.rows {
    display: grid;
    grid-auto-flow: column;
    grid-template-rows: repeat(3, 24px);
    grid-template-columns: 96px 71px 101px auto;
    margin: 5px 0 0 3px;
    padding-left: 9px;
    border-left: 1px solid #d4d8de;
}
.small {
    display: flex;
    align-items: center;
    gap: 2px;
    white-space: nowrap;
}
.small .down {
    margin-left: 8px;
}
.sorter {
    width: 144px;
    padding: 15px 4px 0 0;
}
.order {
    display: flex;
    justify-content: space-between;
    padding: 0 2px 0 6px;
}
.sorter input {
    appearance: none;
    display: block;
    width: 130px;
    height: 12px;
    margin: 16px 0 0 13px;
    background: linear-gradient(#c8c8c8, #c8c8c8 1px, #e7eaea 1px, #e7eaea 7px, #c8c8c8 7px) 0 3px / 100% 8px no-repeat;
}
.sorter input::-webkit-slider-thumb {
    appearance: none;
    width: 8px;
    height: 12px;
    background: #0078d7;
    clip-path: polygon(0 0, 100% 0, 100% 75%, 50% 100%, 0 75%);
}
.ticks {
    width: 121px;
    height: 3px;
    margin: 5px 0 0 17px;
    background: repeating-linear-gradient(90deg, #111, #111 1px, transparent 1px, transparent 12px);
}

/* main area */
main {
    display: flex;
    flex: 1;
    min-height: 0;
    border-top: 3px solid #e3e7ec;
}
.toolbar {
    width: 24px;
    background: #fff;
    display: flex;
    flex-direction: column;
    align-items: center;
}
.toolbar button {
    flex: none;
    display: grid;
    place-items: center;
    width: 24px;
    height: 24px;
}
.toolbar .line {
    margin-top: 2px;
}
.toolbar hr {
    flex: none;
    width: 20px;
    height: 1px;
    margin: 3px 0 1px;
    border: 0;
    background: #888;
}
.toolbar .right {
    flex: none;
    height: 10px;
}
.right::before {
    content: "";
    display: block;
    border: 3px solid transparent;
    border-left-color: #000;
    border-right: 0;
}
.tee {
    font: bold 16px "Liberation Serif", serif;
    fill: #4a4ae8;
}
.work {
    flex: 1;
    min-width: 0;
    display: flex;
    flex-direction: column;
}
.plot {
    flex: 1;
    min-height: 0;
    display: grid;
    grid-template-columns: 21px 1fr 17px;
    grid-template-rows: 20px 1fr;
}
.plot svg {
    width: 100%;
    height: 100%;
}
.ruler-x {
    grid-area: 1 / 2;
    background: #ccc;
}
.plot .ruler-y {
    grid-area: 1 / 1 / 3 / 2;
    background: #ccc;
    border-right: 1px solid #888;
}
.ruler-x path,
.ruler-y path {
    stroke: #000080;
}
.plot text {
    font-size: 11px;
}
.ruler-x text,
.ruler-y text {
    fill: #000080;
}
.board {
    grid-area: 2 / 2;
    background: #000;
}
#grid path {
    stroke: #1a1a1a;
    stroke-dasharray: 10 3 4 3;
}
.vscroll {
    grid-area: 1 / 3 / 3 / 4;
    display: flex;
    flex-direction: column;
    align-items: center;
    justify-content: space-between;
    padding: 6px 0;
    border-left: 1px solid #fff;
}
.plot .vscroll svg {
    width: 8px;
    height: 6px;
}
.pages {
    display: flex;
    height: 22px;
    flex: none;
    border-bottom: 1px solid #222;
    margin-bottom: 4px;
}
.pagetabs {
    display: flex;
    width: 241px;
    padding: 3px 0 0 12px;
    background: #fff;
}
.pagetabs button {
    display: flex;
    align-items: center;
    gap: 1px;
    padding: 0 3px;
}
.pagetabs button:last-child {
    height: 14px;
    margin-top: 2px;
    border-right: 1px solid #666;
}
.pagetabs .active {
    background: #a6caf0;
    border: 1px solid #666;
    border-bottom: 0;
}
.hscroll {
    flex: 1;
    display: flex;
    justify-content: space-between;
    height: 16px;
    padding: 3px 5px 0;
    border: solid #fff;
    border-width: 1px 0;
}
.log {
    flex: none;
    height: 124px;
    padding: 16px 2px 0;
    background: #fff;
    border: 1px solid #aaa;
    font-size: 11px;
    line-height: 13px;
    color: #000;
}
.log p {
    margin: 0;
    white-space: nowrap;
}
.log b {
    color: #ff8000;
}
.log span {
    color: #ffa500;
    font-family: "Liberation Mono", "Noto Sans CJK SC", monospace;
}

/* layer strip */
.layers {
    width: 24px;
    background: #fff;
    display: flex;
    flex-direction: column;
    align-items: center;
    padding-top: 4px;
}
.layers .name {
    writing-mode: vertical-rl;
    height: 40px;
    margin: 3px 0 0;
    font-size: 11px;
}
.layers button {
    flex: none;
    width: 16px;
    height: 16px;
    margin-bottom: 8px;
}
.layers .name + button {
    margin-top: -2px;
}
.layers .swatch {
    width: 14px;
    height: 14px;
    margin-bottom: 10px;
    border: 1px solid #444;
}
.lime { background: #4dff4d; }
.pink { background: #ffa6d3; }
.yellow { background: #ffff73; }
.salmon { background: #ffa6a6; }
.purple { background: #a64dff; }
.teal { background: #4da6a6; }
.orange { background: #ffa673; }
.green { background: #4da64d; }
.rose { background: #ff4da6; }
.sky { background: #4da6ff; }
.mint { background: #4dffa6; }
.magenta { background: #ff4dff; }
.blue { background: #4d4dff; }
.lavender { background: #a6a6ff; }

/* control panel */
.panel {
    width: 270px;
    padding: 4px 5px 0 3px;
}
.box {
    height: 295px;
    padding: 10px 11px 0 7px;
    border: 1px solid #a0a0a0;
}
.btn {
    background: #e1e1e1;
    border: 1px solid #adadad;
}
.btn:disabled {
    background: #ccc;
    border-color: #bfbfbf;
    color: #838383;
}
.btn .down,
.menu .down {
    border-top-color: #000;
}
.coord {
    display: flex;
    align-items: center;
    width: 100%;
    height: 23px;
    padding-right: 6px;
    color: #f00;
}
.coord span {
    flex: 1;
}
.jog {
    display: grid;
    grid-template-columns: 27px 32px 18px 32px 22px 32px 18px 32px;
    grid-template-rows: repeat(3, 33px);
    margin-top: 3px;
}
.pad {
    display: flex;
    align-items: center;
    justify-content: center;
    gap: 3px;
    height: 32px;
    background: #f8f8f8;
    border: 1px solid #333;
}
.up { grid-area: 1 / 4; }
.left { grid-area: 2 / 2; }
.rightward { grid-area: 2 / 6; }
.downward { grid-area: 3 / 4; }
.head-up { grid-area: 1 / 8; }
.head-down { grid-area: 3 / 8; }
.left svg { transform: rotate(-90deg); }
.rightward svg { transform: rotate(90deg); }
.downward svg { transform: rotate(180deg); }
.preview {
    grid-area: 3 / 1 / 4 / 3;
    width: 49px;
    height: 20px;
    align-self: end;
}
input[type="checkbox"] {
    appearance: none;
    width: 13px;
    height: 13px;
    margin: 0 3px 0 0;
    border: 1px solid #333;
    background: #fff;
    flex: none;
}
input[type="checkbox"]:checked {
    background: #fff url("data:image/svg+xml,%3Csvg xmlns='http://www.w3.org/2000/svg' width='11' height='11'%3E%3Cpath d='M1 5 4 8 10 2' fill='none' stroke='%23333' stroke-width='1.5'/%3E%3C/svg%3E") no-repeat;
}
label {
    display: flex;
    align-items: center;
    white-space: nowrap;
}
select,
.fields input {
    appearance: none;
    height: 22px;
    margin: 0;
    padding: 0 20px 0 2px;
    font: inherit;
    color: #000;
    border: 1px solid #7a7a7a;
    border-radius: 0;
    background: #fff url("data:image/svg+xml,%3Csvg xmlns='http://www.w3.org/2000/svg' width='16' height='16'%3E%3Cpath d='M4 6 8 10 12 6' fill='none' stroke='%23555'/%3E%3C/svg%3E") no-repeat right center;
}
.mono {
    width: 52px;
    height: 20px;
    padding: 0 17px 0 0;
    font: 11px "Liberation Mono", monospace;
    text-align: right;
    text-align-last: right;
    background: #fff url("data:image/svg+xml,%3Csvg xmlns='http://www.w3.org/2000/svg' width='16' height='18'%3E%3Cpath d='M0 0H16V18H0Z' fill='%23e1e1e1'/%3E%3Cpath d='M4 7 8 11 12 7' fill='none' stroke='%23555'/%3E%3C/svg%3E") no-repeat right center;
}
.speed {
    display: flex;
    align-items: center;
    height: 22px;
    padding-left: 3px;
}
.jog + .speed {
    margin-top: 6px;
}
.wide {
    width: 60px;
    margin-left: 7px;
}
.step {
    margin: 0 15px 0 auto;
}
.dots {
    margin-left: 5px;
    color: #00f;
    font-weight: bold;
}
.burst {
    margin: 0 8px 0 auto;
}
.btns {
    display: grid;
    grid-template-columns: repeat(3, 1fr);
    gap: 2px 4px;
}
.btns .btn {
    display: flex;
    align-items: center;
    justify-content: center;
    white-space: nowrap;
}
.btns .btn svg {
    margin-left: 6px;
}
.btns .marker svg {
    margin: 0 4px 0 6px;
}
.btns span {
    flex: 1;
}
.btns .down {
    margin: 0 6px 0 4px;
}
.switches {
    grid-template-rows: 23px 26px 26px;
    margin-top: 25px;
}
fieldset {
    margin: 3px 1px 0 0;
    padding: 8px 11px 6px 6px;
    border: 1px solid #a0a0a0;
}
legend {
    padding: 0 1px;
}
.machine {
    grid-template-rows: repeat(4, 28px);
}
.options {
    display: flex;
    justify-content: space-between;
    align-items: flex-start;
    margin-top: 8px;
    padding-left: 3px;
    height: 79px;
}
.checks {
    width: 130px;
    display: grid;
    grid-auto-rows: 20px;
}
.zero {
    width: 92px;
    margin-top: 2px;
}
.distance {
    display: flex;
    justify-content: space-between;
    margin-left: -1px;
}
.distance .mono {
    width: 67px;
}
.distance label {
    width: 102px;
}
.counter {
    display: flex;
    justify-content: space-between;
    align-items: flex-end;
    padding: 2px 13px 1px 6px;
}
.counter dl {
    display: grid;
    grid-template-columns: 62px auto;
    column-gap: 2px;
    line-height: 20px;
    margin: 0;
}
.counter dt {
    text-align: right;
}
.counter dd {
    margin: 0;
}
.counter .btn {
    width: 73px;
    height: 23px;
    margin-bottom: 5px;
}

/* status bar */
.status {
    display: flex;
    flex: none;
    justify-content: flex-end;
    height: 10px;
    overflow: hidden;
    border-top: 2px solid #9a9ca6;
    background: linear-gradient(#e8ebef, #d4d8de);
    line-height: 16px;
    padding-top: 3px;
    font-size: 11px;
    color: #1e395b;
}
.status span {
    flex: none;
    height: 16px;
    white-space: nowrap;
}
.status .cell {
    padding: 0 4px;
    border-left: 1px solid #999;
}
.status .pos {
    width: 104px;
    padding-left: 9px;
    color: #000;
}
.status .state {
    width: 58px;
}
.status .xy {
    width: 152px;
    text-align: center;
    background: #e0e0e0;
    color: #000;
}
.status .tune {
    width: 38px;
    padding: 0 0 0 8px;
}
.status .dim {
    width: 54px;
    color: #999;
}
.status input {
    width: 60px;
    height: 16px;
    margin: 0 5px 0 0;
    border: 0;
    background: #fafafa;
    font: inherit;
}
.status .param {
    width: 38px;
}

/* open dialog, floats over the drawing board */
.dialog {
    position: absolute;
    left: 497px;
    top: 218px;
    width: 925px;
    background: #f0f0f0;
    border: 1px solid #333;
    font: 12px/16px Roboto, sans-serif;
    color: #000;
}
.dialog-title {
    display: flex;
    align-items: center;
    gap: 5px;
    height: 30px;
    padding: 0 10px 0 8px;
    background: #fff;
}
.dialog-title button {
    margin-left: auto;
}
.dialog-body {
    display: flex;
    justify-content: space-between;
    padding: 7px 7px 6px 6px;
}
.browser {
    width: 543px;
    display: grid;
    grid-template-columns: 87px 1fr;
    grid-template-rows: 22px 274px 16px auto;
    column-gap: 6px;
}
.lookin {
    grid-column: 1 / 3;
    display: flex;
    align-items: center;
    gap: 8px;
    padding-left: 46px;
}
.lookin label {
    width: 39px;
    justify-content: flex-end;
}
.lookin select {
    width: 261px;
    padding-left: 20px;
    margin-right: 7px;
    background-image: url("data:image/svg+xml,%3Csvg xmlns='http://www.w3.org/2000/svg' width='16' height='16'%3E%3Cpath d='M4 6 8 10 12 6' fill='none' stroke='%23555'/%3E%3C/svg%3E"), url("data:image/svg+xml,%3Csvg xmlns='http://www.w3.org/2000/svg' width='14' height='16'%3E%3Cpath d='M1 1H11V15H1Z' fill='%23ffe9a0' stroke='%23e8c860'/%3E%3Cpath d='M11 10H13V15H9Z' fill='%23f0cc60'/%3E%3C/svg%3E");
    background-position: right center, 7px center;
}
.menu {
    display: flex;
    align-items: center;
    gap: 2px;
}
.places {
    grid-row: 2 / 5;
    display: flex;
    flex-direction: column;
    gap: 11px;
    margin-top: 7px;
    padding-top: 6px;
    background: #f4f4f4;
}
.places button {
    display: flex;
    flex-direction: column;
    align-items: center;
    gap: 1px;
}
.list {
    position: relative;
    margin-top: 7px;
    background: #fff;
    overflow: hidden;
}
.caret {
    position: absolute;
    left: 132px;
    top: 1px;
}
.list table {
    width: 500px;
    height: 100%;
    table-layout: fixed;
    border-collapse: collapse;
    margin-left: 4px;
}
.list th,
.list td {
    padding: 0 0 0 6px;
    text-align: left;
    font-weight: normal;
    border-right: 1px solid #e5eefa;
}
.list th {
    height: 24px;
}
.list th:first-child {
    width: 267px;
    padding-left: 3px;
}
.list th:nth-child(2) {
    width: 144px;
}
.list td:first-child svg {
    display: inline-block;
    vertical-align: -2px;
    margin-right: 4px;
}
.selected td {
    height: 18px;
    background: #cce8ff;
    border-top: 1px dotted #333;
    border-bottom: 1px dotted #333;
}
.selected td:first-child {
    border-left: 1px dotted #333;
}
.rest td {
    height: 225px;
}
.listscroll {
    grid-column: 2;
    display: flex;
    align-items: center;
    padding: 0 5px;
}
.listscroll .thumb {
    width: 304px;
    height: 15px;
    margin: 0 auto 0 4px;
    background: #cdcdcd;
}
.fields {
    grid-column: 2;
    display: grid;
    grid-template-columns: 94px 245px 1fr;
    grid-template-rows: 22px 22px;
    row-gap: 5px;
    margin: 9px 0 0 2px;
}
.fields .btn {
    justify-self: end;
    width: 73px;
}
.fields .open {
    border: 2px solid #0078d7;
}
#ftype {
    background-color: #e1e1e1;
    border-color: #adadad;
}
.previewer {
    width: 355px;
}
.info {
    display: flex;
    justify-content: space-between;
    align-items: center;
    height: 26px;
    padding: 8px 13px 0 5px;
    font: 11px/16px "DejaVu Sans Condensed", sans-serif;
}
.sheet {
    border: 1px solid #a0a0a0;
    background: #fff;
}
.sheet text {
    font: bold 7px "Liberation Sans", sans-serif;
}
.sheet .l1 {
    font-size: 9px;
}
.grip {
    position: absolute;
    right: 2px;
    bottom: 1px;
    background: #f0f0f0;
}
```
